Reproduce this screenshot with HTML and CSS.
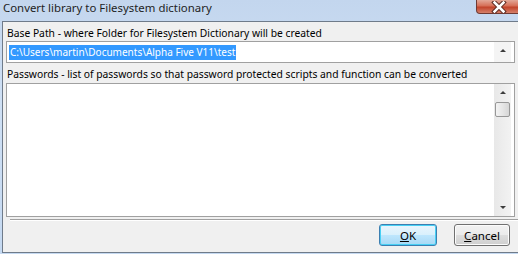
FILE: index.html
```html
<!DOCTYPE html>
<html lang="en">
<head>
    <meta charset="UTF-8">
    <title>Convert library to Filesystem dictionary</title>
    <link rel="stylesheet" href="styles.css">
</head>
<body>
    <div class="window">
        <div class="titlebar">
            <span class="title">Convert library to Filesystem dictionary</span>
            <div class="close">
                <svg width="16" height="12" viewBox="0 0 16 12">
                    <path d="M3.5 1.5 L12.5 10.5 M12.5 1.5 L3.5 10.5" stroke="#5a2a22" stroke-width="4.5" stroke-linecap="square"/>
                    <path d="M3.5 1.5 L12.5 10.5 M12.5 1.5 L3.5 10.5" stroke="#ffffff" stroke-width="2.5" stroke-linecap="square"/>
                </svg>
            </div>
        </div>

        <div class="client">
            <div class="label">Base Path - where Folder for Filesystem Dictionary will be created</div>
            <div class="edit single">
                <div class="text"><span class="sel">C:\Users\martin\Documents\Alpha Five V11\test</span></div>
                <div class="vscroll">
                    <span class="arrow up"></span>
                </div>
            </div>

            <div class="label">Passwords - list of passwords so that password protected scripts and function can be converted</div>
            <div class="edit multi">
                <div class="text"></div>
                <div class="vscroll">
                    <span class="arrow up"></span>
                    <span class="thumb"></span>
                    <span class="track"></span>
                    <span class="arrow down"></span>
                </div>
            </div>

            <div class="separator"></div>

            <div class="buttons">
                <button class="button default"><u>O</u>K</button>
                <button class="button"><u>C</u>ancel</button>
            </div>
        </div>
    </div>
</body>
</html>
```

FILE: styles.css
```css
body {
    margin: 0;
    width: 518px;
    height: 254px;
    overflow: hidden;
    font-family: "Noto Sans", "Open Sans", sans-serif;
    font-size: 11px;
    color: #000;
}
.window {
    width: 521px;
    height: 254px;
    background: linear-gradient(#c3d6ee, #cfe0f4 40%, #c5d9f1);
    display: flex;
    flex-direction: column;
}
.titlebar {
    height: 21px;
    display: flex;
    justify-content: space-between;
    align-items: flex-start;
}
.title {
    padding-left: 3px;
    line-height: 16px;
    font-size: 11.4px;
    color: #1e1e1e;
}
.close {
    width: 45px;
    height: 14px;
    border: 1px solid #6f3a33;
    border-top: none;
    border-radius: 0 0 4px 4px;
    background: linear-gradient(#e3a898, #d66f57 45%, #c2442b 55%, #d5806a);
    display: flex;
    align-items: center;
    justify-content: center;
    box-sizing: border-box;
}
.client {
    margin-left: 2px;
    height: 232px;
    background: #f0f0f0;
    border: 1px solid #6f7b8a;
    border-right: none;
    padding: 0 0 0 3px;
    box-sizing: border-box;
}
.label {
    height: 19px;
    line-height: 15px;
    padding-top: 4px;
    padding-left: 1px;
    font-size: 10.3px;
    box-sizing: border-box;
    white-space: nowrap;
}
.edit {
    width: 509px;
    background: #fff;
    border: 1px solid #a0a0a0;
    box-sizing: border-box;
    display: flex;
}
.edit .text {
    flex: 1;
    padding: 2px 0 0 2px;
}
.single {
    height: 22px;
}
.multi {
    height: 134px;
    margin-top: 1px;
}
.sel {
    display: inline-block;
    background: #3399ff;
    color: #fff;
    font-size: 10px;
    line-height: 15px;
    padding: 0 1px;
}
.vscroll {
    width: 17px;
    margin-right: 3px;
    background: linear-gradient(90deg, #e8e8e8, #f2f2f2);
    display: flex;
    flex-direction: column;
    align-items: center;
}
.single .vscroll {
    background: #f4f4f4;
}
.arrow {
    width: 0;
    height: 0;
    border-left: 3px solid transparent;
    border-right: 3px solid transparent;
}
.arrow.up {
    border-bottom: 3px solid #3c3c3c;
    margin-top: 7px;
}
.arrow.down {
    border-top: 3px solid #3c3c3c;
    margin-bottom: 7px;
}
.thumb {
    width: 15px;
    height: 15px;
    margin-top: 8px;
    border: 1px solid #979797;
    border-radius: 2px;
    box-sizing: border-box;
    background: linear-gradient(90deg, #f3f3f3, #e6e6e6 50%, #d6d6d6);
}
.track {
    flex: 1;
}
.separator {
    margin: 2px 0 0 4px;
    border-top: 1px solid #a0a0a0;
    border-bottom: 1px solid #fff;
}
.buttons {
    display: flex;
    gap: 17px;
    padding-left: 373px;
    margin-top: 3px;
}
.button {
    width: 56px;
    height: 22px;
    padding: 0;
    font-family: "Noto Sans", "Open Sans", sans-serif;
    font-size: 11.5px;
    color: #000;
    border: 1px solid #707070;
    border-radius: 3px;
    background: linear-gradient(#f2f2f2, #ebebeb 50%, #dddddd 51%, #cfcfcf);
    box-shadow: inset 0 0 0 1px #fcfcfc;
}
.button.default {
    width: 58px;
    border-color: #3c7fb1;
    background: linear-gradient(#eaf6fd, #d9f0fc 50%, #bee6fd 51%, #a7d9f5);
    box-shadow: inset 0 0 0 1px #48d0f4;
}
```
